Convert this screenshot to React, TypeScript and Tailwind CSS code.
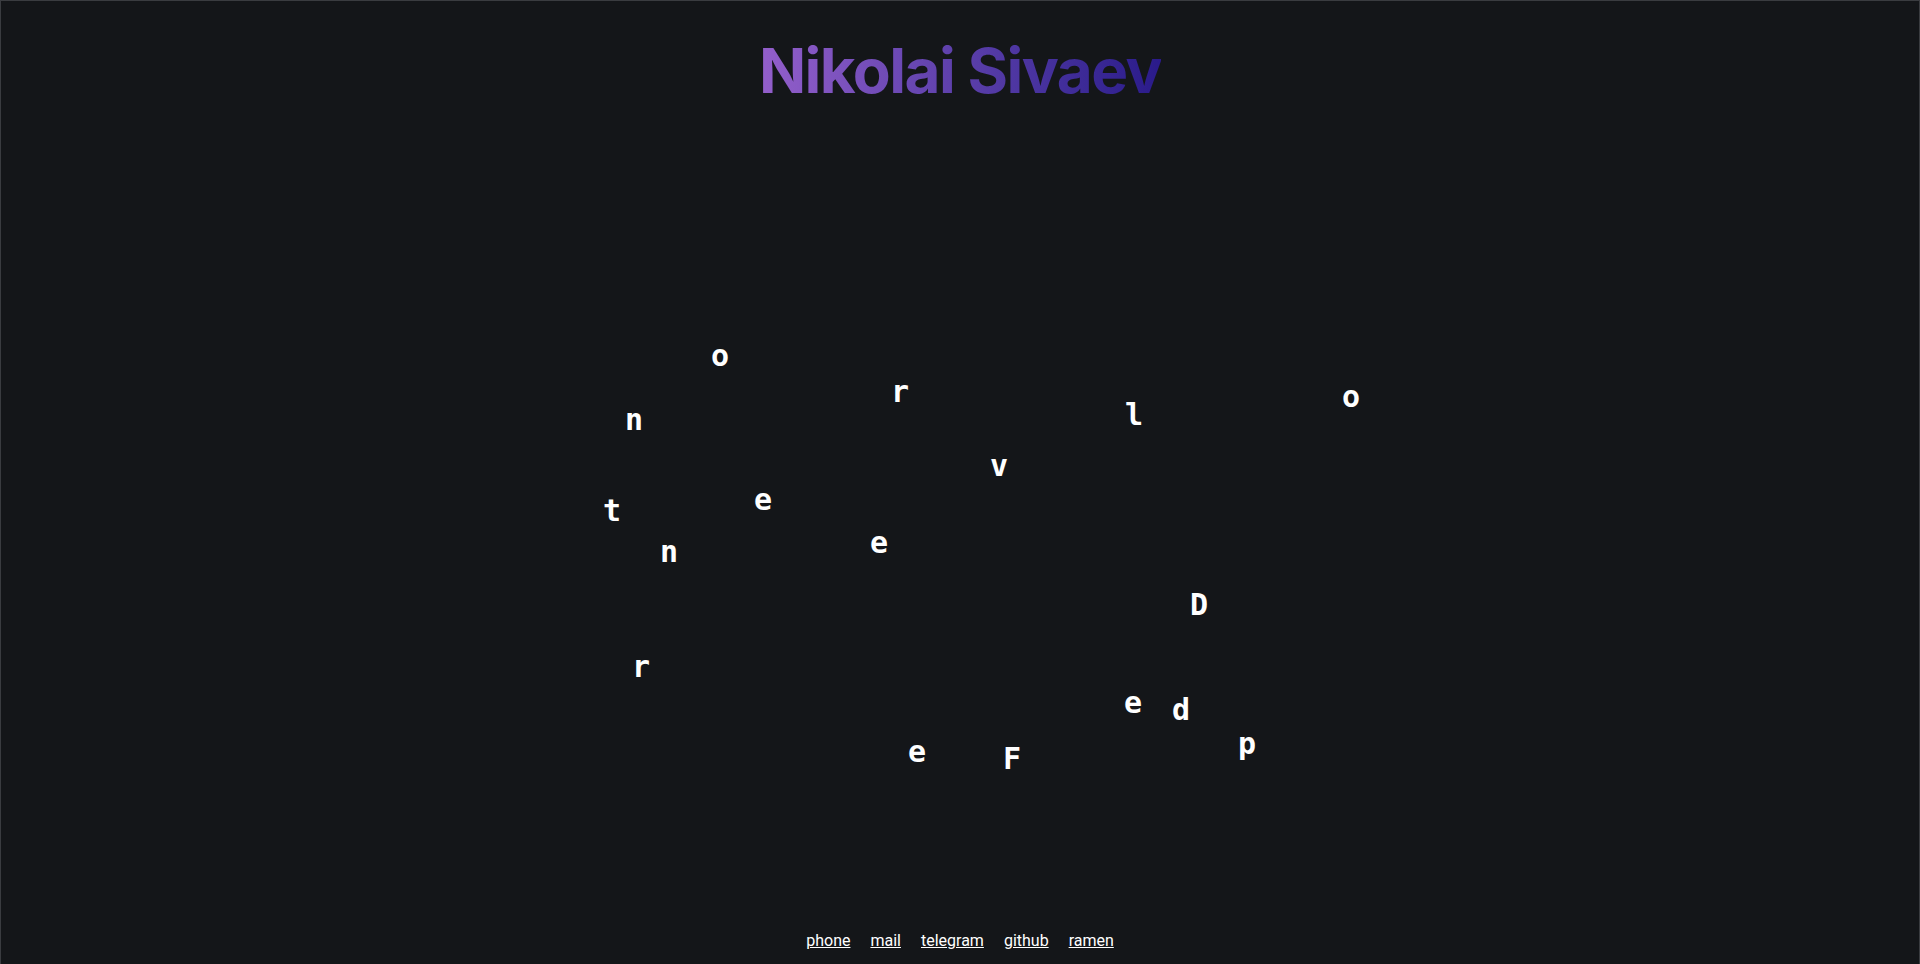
const letters = [
  { char: "F", place: "left-[443px] top-[461px]" },
  { char: "r", place: "left-[331px] top-[94px]" },
  { char: "o", place: "left-[151px] top-[58px]" },
  { char: "n", place: "left-[65px] top-[122px]" },
  { char: "t", place: "left-[43px] top-[213px]" },
  { char: "e", place: "left-[194px] top-[202px]" },
  { char: "n", place: "left-[100px] top-[254px]" },
  { char: "d", place: "left-[612px] top-[412px]" },
  { char: "D", place: "left-[630px] top-[307px]" },
  { char: "e", place: "left-[310px] top-[245px]" },
  { char: "v", place: "left-[430px] top-[168px]" },
  { char: "e", place: "left-[564px] top-[405px]" },
  { char: "l", place: "left-[565px] top-[117px]" },
  { char: "o", place: "left-[782px] top-[99px]" },
  { char: "p", place: "left-[678px] top-[446px]" },
  { char: "e", place: "left-[348px] top-[454px]" },
  { char: "r", place: "left-[72px] top-[369px]" },
];

const links = [
  { label: "phone", href: "#phone" },
  { label: "mail", href: "#mail" },
  { label: "telegram", href: "#telegram" },
  { label: "github", href: "#github" },
  { label: "ramen", href: "#ramen" },
];

export default function App() {
  return (
    <div className="flex min-h-screen flex-col overflow-hidden border-t border-r border-l border-[#3a3c40] bg-[#141619] font-['Inter',sans-serif] text-white">
      <header className="flex h-[137px] justify-center pt-[38px]">
        <h1 className="h-16 bg-gradient-to-r from-[#945fcb] to-[#2a1a8a] bg-clip-text text-[62px] leading-[64px] font-bold tracking-tight text-transparent">
          Nikolai Sivaev
        </h1>
      </header>

      <main className="flex flex-1 items-center justify-center">
        <div className="relative h-[500px] w-[800px] shrink-0 font-['DejaVu_Sans_Mono',monospace] text-[30px] leading-10 font-bold">
          {letters.map((letter, index) => (
            <span key={index} className={`absolute ${letter.place}`}>
              {letter.char}
            </span>
          ))}
        </div>
      </main>

      <footer className="flex h-[46px] justify-center">
        <nav className="flex items-center gap-5 font-['Roboto',sans-serif]">
          {links.map((link) => (
            <a key={link.label} href={link.href} className="text-base leading-6 underline">
              {link.label}
            </a>
          ))}
        </nav>
      </footer>
    </div>
  );
}
